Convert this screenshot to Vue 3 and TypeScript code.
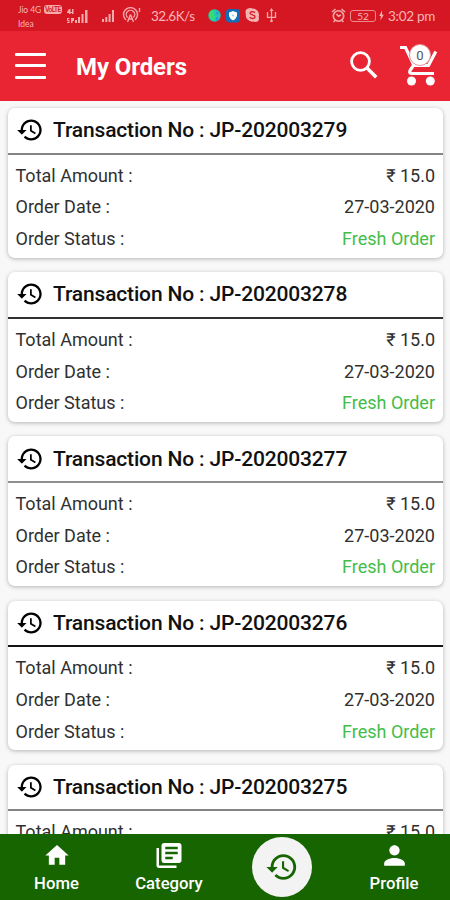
<script setup lang="ts">
interface Order {
  id: string
  rule: string
  rows: Row[]
}
interface Row {
  label: string
  value: string
  fresh?: boolean
}

const rules: string[] = ['#858585', '#303030', '#8e8e8e', '#151515', '#858585']
const details: Row[] = [
  { label: 'Total Amount :', value: '₹ 15.0' },
  { label: 'Order Date :', value: '27-03-2020' },
  { label: 'Order Status :', value: 'Fresh Order', fresh: true },
]
// The last card is only partly in view, so just its first row is rendered.
const orders: Order[] = [279, 278, 277, 276, 275].map((n, i, all) => ({
  id: `JP-202003${n}`,
  rule: rules[i],
  rows: i === all.length - 1 ? details.slice(0, 1) : details,
}))

const historyPath =
  'M13 3c-4.97 0-9 4.03-9 9H1l3.89 3.89.07.14L9 12H6c0-3.87 3.13-7 7-7s7 3.13 7 7-3.13 7-7 7c-1.93 0-3.68-.79-4.94-2.06l-1.42 1.42C8.27 19.99 10.51 21 13 21c4.97 0 9-4.03 9-9s-4.03-9-9-9zm-1 5v5l4.28 2.54.72-1.21-3.5-2.08V8H12z'
</script>

<template>
  <div class="screen">
    <div class="status">
      <div class="carrier"><div class="carrier-line">Jio 4G <span class="volte">VoLTE</span></div><div>Idea</div></div>
      <svg class="signal-a" width="23" height="16" viewBox="0 0 23 16" fill="#f5a9aa">
        <path d="M3 1h1.500v3H6v1H4.500v1H3V5H1V4zM6 1h1.500v5H6zM1 10h2.500v1H2v1h1.500v3H1v-1h1.500v-1H1zM5 10h3v3H6.500v2H5z" />
        <path d="M9 12h2v3H9zM12 9h2v6h-2zM15.500 6h2v9h-2zM19 2h2.500v13H19z" />
      </svg>
      <svg class="signal-b" width="14" height="14" viewBox="0 0 14 14" fill="#f5a9aa">
        <path d="M1 10h2v3H1zM4.300 8h2v5h-2zM7.600 5h2v8h-2zM11 1h2v12h-2z" />
      </svg>
      <svg class="hotspot" width="19" height="17" viewBox="0 0 19 17" fill="none" stroke="#f5a9aa" stroke-width="1.400">
        <path d="M4 13a7 7 0 1 1 9 0M5.500 10.500a4.200 4.200 0 1 1 6 0M8.500 7.500 5.500 15M8.500 7.500l3 7.500M6.500 12h4M17.500 1v4" />
      </svg>
      <span class="speed">32.6K/s</span>
      <svg class="globe" width="13" height="13" viewBox="0 0 13 13">
        <circle cx="6.500" cy="6.500" r="6.200" fill="#20c7b4" />
        <path d="M1 4Q4 0 7 2L5 6l3 1-2 4Q1 11 1 4Z" fill="#35dd70" />
        <path d="m8 2 3 2-2 2zM8 8l3 1-3 3z" fill="#2597e8" />
      </svg>
      <svg class="shield" width="14" height="14" viewBox="0 0 14 14">
        <rect width="14" height="13.500" rx="3.500" fill="#126cb8" />
        <path d="m7 2 4 1.500V7q-1 3-4 4.500Q4 10 3 7V3.500z" fill="#fff" />
        <circle cx="7" cy="6.500" r="1" fill="#8ecaf0" />
      </svg>
      <svg class="chat" width="15" height="15" viewBox="0 0 15 15">
        <path d="M5 0q2 .1 2.500.5a6.500 6.500 0 0 1 6.200 8.300Q15 14 10 14l-2-.4A6.500 6.500 0 0 1 .900 6.100Q-1 1 5 0Z" fill="#f5b3b3" />
        <path d="M10 4.700C8 3 5 3.700 5 5.300c0 2.200 5 1 5 3.400C10 11 6.300 11 4.700 9.300" fill="none" stroke="#d51b28" stroke-width="1.300" />
      </svg>
      <svg class="usb" width="11" height="15" viewBox="0 0 11 15" fill="none" stroke="#f5a9aa" stroke-width="1.300">
        <path d="M5.500 2v11M1.500 4v5.300h8V4" />
        <path d="m5.500 0 2 3h-4z" fill="#f5a9aa" stroke="none" />
        <circle cx="5.500" cy="13" r="1.300" fill="#f5a9aa" stroke="none" />
      </svg>
      <svg class="alarm" width="15" height="15" viewBox="0 0 15 15" fill="none" stroke="#f5a9aa" stroke-width="1.600">
        <circle cx="7.500" cy="8" r="5.200" />
        <path d="M1 4l3.500-3M14 4l-3.500-3M5.500 6l2 2.300L10 7M4 12.500 2.500 14M11 12.500l1.500 1.500" />
      </svg>
      <div class="battery">52</div>
      <svg class="bolt" width="5" height="11" viewBox="0 0 6 12" fill="#f5b3b3"><path d="M3.600 0 .300 6.500h2L1.700 12l4-7h-2z" /></svg>
      <span class="time">3:02 pm</span>
    </div>

    <header class="bar">
      <div class="menu"><i></i><i></i><i></i></div>
      <h1>My Orders</h1>
      <svg class="search" width="28" height="28" viewBox="0 0 28 28" fill="none" stroke="#fff">
        <circle cx="10.500" cy="10.500" r="8.900" stroke-width="2.800" />
        <path d="m17 17 9.200 9.200" stroke-width="3.500" />
      </svg>
      <div class="cart">
        <svg width="38" height="42" viewBox="0 0 38 42" fill="none" stroke="#fff" stroke-width="3.200">
          <path d="M0 3.500h5.500l8.500 18h14.500l7.300-14M14 20.500l-4 6q-1.200 3 2 3h22" />
          <circle cx="11.500" cy="37" r="4.500" fill="#fff" stroke="none" />
          <circle cx="30.300" cy="37" r="4.500" fill="#fff" stroke="none" />
        </svg>
        <span class="count">0</span>
      </div>
    </header>

    <main class="list">
      <article v-for="order in orders" :key="order.id" class="card">
        <div class="card-head" :style="{ borderBottomColor: order.rule }">
          <svg class="history" width="28" height="28" viewBox="0 0 24 24"><path :d="historyPath" /></svg>
          <h2>Transaction No : {{ order.id }}</h2>
        </div>
        <div class="rows">
          <div v-for="row in order.rows" :key="row.label" class="row">
            <span>{{ row.label }}</span><span :class="{ fresh: row.fresh }">{{ row.value }}</span>
          </div>
        </div>
      </article>
    </main>

    <nav class="tabs">
      <div class="tab">
        <svg width="28" height="28" viewBox="0 0 24 24" fill="#fff"><path d="M10 20v-6h4v6h5v-8h3L12 3 2 12h3v8z" /></svg>
        <span>Home</span>
      </div>
      <div class="tab">
        <svg width="30" height="30" viewBox="0 0 24 24" fill="#fff"><path d="M4 6H2v14c0 1.100.9 2 2 2h14v-2H4V6zm16-4H8c-1.100 0-2 .9-2 2v12c0 1.100.9 2 2 2h12c1.100 0 2-.9 2-2V4c0-1.100-.9-2-2-2zm-1 9H9V9h10v2zm-4 4H9v-2h6v2zm4-8H9V5h10v2z" /></svg>
        <span>Category</span>
      </div>
      <div class="tab">
        <div class="active"><svg width="34" height="34" viewBox="0 0 24 24" fill="#176500"><path :d="historyPath" /></svg></div>
      </div>
      <div class="tab">
        <svg width="31" height="31" viewBox="0 0 24 24" fill="#fff"><path d="M12 12c2.210 0 4-1.790 4-4s-1.790-4-4-4-4 1.790-4 4 1.790 4 4 4zm0 2c-2.670 0-8 1.340-8 4v2h16v-2c0-2.660-5.330-4-8-4z" /></svg>
        <span>Profile</span>
      </div>
    </nav>
  </div>
</template>

<style>
body { margin: 0; }
</style>

<style scoped>
.screen { width: 450px; height: 900px; display: flex; flex-direction: column; overflow: hidden; background: #f8f8f8; font-family: Roboto, "Noto Sans", sans-serif; color: #111; }
svg { display: block; flex: none; }
.status { height: 31px; flex: none; box-sizing: border-box; display: flex; align-items: center; background: #d41722; color: #f8b5b6; padding: 0 15px 0 18px; white-space: nowrap; }
.carrier { width: 46px; font: 8.500px/14px Lato, sans-serif; padding-top: 2px; }
.carrier-line { display: flex; align-items: center; gap: 3px; letter-spacing: -0.1px; }
.volte { font-size: 6.500px; line-height: 9px; font-weight: 700; background: #f5a9aa; color: #d41722; border-radius: 3px; padding: 0 1px; letter-spacing: -0.5px; }
.signal-a { margin-left: 2px; }
.signal-b { margin-left: 12px; }
.hotspot { margin-left: 7px; margin-top: -1px; }
.speed { width: 58px; margin-left: 10px; font: 13.500px/18px Lato, sans-serif; letter-spacing: -0.5px; padding-top: 1px; box-sizing: border-box; }
.globe { margin-left: -1px; }
.shield { margin-left: 5px; }
.chat { margin-left: 5px; }
.usb { margin-left: 6px; }
.alarm { margin-left: auto; }
.battery { box-sizing: border-box; width: 26px; height: 12px; border: 1px solid #ed8a8e; border-radius: 3px; margin-left: 4px; font: 10px/10px Lato, sans-serif; text-align: center; }
.bolt { margin-left: 3px; }
.time { margin-left: 4px; font: 13.500px/18px Lato, sans-serif; letter-spacing: -0.3px; padding-top: 1px; box-sizing: border-box; }
.bar { height: 69.500px; flex: none; box-sizing: border-box; display: flex; align-items: center; background: #e92533; padding: 0 12px 0 15px; color: #fff; }
.menu { width: 31px; display: flex; flex-direction: column; gap: 8.500px; }
.menu i { height: 3px; background: #fff; border-radius: 1px; }
.bar h1 { margin: 3px auto 0 30px; font-size: 24px; line-height: 30px; font-weight: 700; letter-spacing: -0.1px; }
.search { margin: 0 22px 1px 0; }
.cart { position: relative; margin-bottom: 2px; }
.count { position: absolute; left: 9px; top: 0; width: 20px; height: 20px; border: 1px solid #e8929a; border-radius: 50%; background: #fff; color: #555; font-size: 13px; line-height: 21px; text-align: center; }
.list { flex: 1; min-height: 0; overflow: hidden; display: flex; flex-direction: column; gap: 14.700px; padding: 7.500px 7px 0 8px; }
.card { height: 149.500px; flex: none; background: #fff; border-radius: 7px; box-shadow: 0 1px 4px rgba(0, 0, 0, 0.28); }
.card-head { height: 46.500px; box-sizing: border-box; display: flex; align-items: center; border-bottom: 2px solid; padding-left: 8px; }
.card-head h2 { margin: 0 0 0 9px; font-size: 21px; line-height: 28px; font-weight: 500; letter-spacing: -0.16px; white-space: nowrap; }
.rows { padding: 4.800px 8px 0 7.500px; }
.row { height: 31.700px; display: flex; align-items: center; justify-content: space-between; font-size: 18px; color: #303030; }
.fresh { color: #43bd49; }
.tabs { height: 66.500px; flex: none; display: grid; grid-template-columns: repeat(4, 1fr); background: #176500; color: #fff; }
.tab { display: flex; flex-direction: column; align-items: center; justify-content: flex-start; font-size: 16.700px; line-height: 20px; font-weight: 500; padding-left: 0.500px; }
.tab > svg { margin-top: 6px; height: 31px; }
.tab > span { margin-top: 3px; }
.active { width: 60px; height: 60px; margin-top: 3px; border-radius: 50%; background: #f3f3f3; display: flex; align-items: center; justify-content: center; }
</style>
